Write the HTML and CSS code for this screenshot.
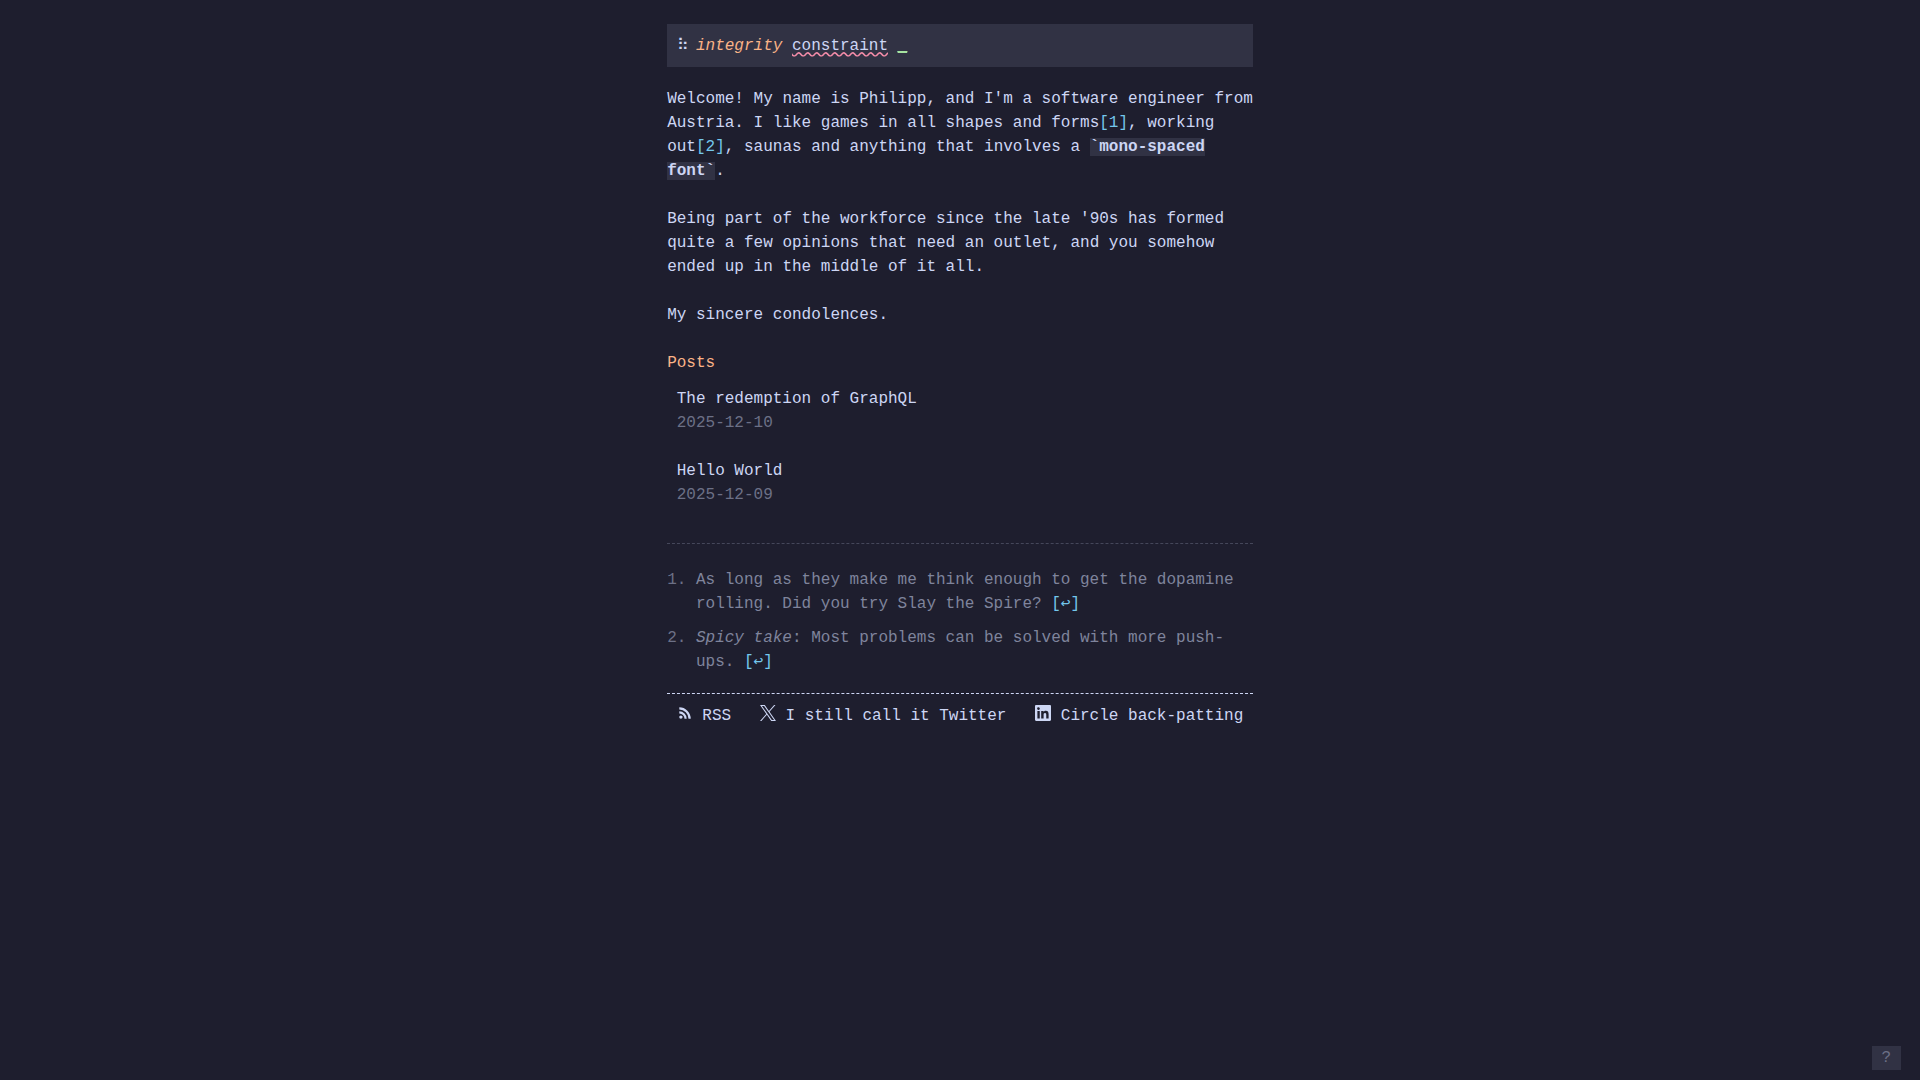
FILE: index.html
```html
<!DOCTYPE html>
<html lang="en">
<head>
    <meta charset="UTF-8">
    <meta name="viewport" content="width=device-width, initial-scale=1.0">
    <title>integrity constraint</title>
    <link rel="stylesheet" href="styles.css">
</head>
<body>
<div class="page">
    <header class="site-header">
        <a href="/"><span class="logo">⠷</span><em>integrity</em> <span class="squiggle">constraint</span> <span class="cursor">_</span></a>
    </header>

    <main>
        <p>Welcome! My name is Philipp, and I'm a software engineer from Austria. I like games in all shapes and forms<a class="ref" id="ref-1" href="#note-1">[1]</a>, working out<a class="ref" id="ref-2" href="#note-2">[2]</a>, saunas and anything that involves a <code>`mono-spaced font`</code>.</p>
        <p>Being part of the workforce since the late '90s has formed quite a few opinions that need an outlet, and you somehow ended up in the middle of it all.</p>
        <p>My sincere condolences.</p>

        <h2>Posts</h2>
        <ul class="posts">
            <li>
                <a href="/posts/the-redemption-of-graphql">The redemption of GraphQL</a>
                <time datetime="2025-12-10">2025-12-10</time>
            </li>
            <li>
                <a href="/posts/hello-world">Hello World</a>
                <time datetime="2025-12-09">2025-12-09</time>
            </li>
        </ul>

        <ol class="footnotes">
            <li id="note-1"><div>As long as they make me think enough to get the dopamine rolling. Did you try Slay the Spire? <a class="ref" href="#ref-1">[↩]</a></div></li>
            <li id="note-2"><div><em>Spicy take</em>: Most problems can be solved with more push-ups. <a class="ref" href="#ref-2">[↩]</a></div></li>
        </ol>
    </main>

    <footer class="site-footer">
        <a href="/rss.xml">
            <svg viewBox="0 0 16 16" aria-hidden="true">
                <circle cx="3.9" cy="12.1" r="1.7" fill="currentColor"/>
                <path d="M2.3 7.4a6.3 6.3 0 0 1 6.3 6.3M2.3 3.4a10.3 10.3 0 0 1 10.3 10.3" fill="none" stroke="currentColor" stroke-width="2.2"/>
            </svg>
            RSS
        </a>
        <a href="https://x.com">
            <svg viewBox="0 0 16 16" aria-hidden="true">
                <path d="M9.52 6.78 15.48 0h-1.41L8.9 5.88 4.76 0H0l6.25 8.9L0 16h1.41l5.46-6.21L11.24 16H16L9.52 6.78zM7.59 8.97l-.63-.88L1.92 1.04h2.17l4.06 5.69.64.88 5.28 7.4h-2.17L7.59 8.97z" fill="currentColor"/>
            </svg>
            I still call it Twitter
        </a>
        <a href="https://www.linkedin.com">
            <svg viewBox="0 0 16 16" aria-hidden="true">
                <path d="M14.8 0H1.2C.5 0 0 .5 0 1.15v13.7C0 15.5.5 16 1.2 16h13.6c.7 0 1.2-.5 1.2-1.15V1.15C16 .5 15.5 0 14.8 0zM4.75 13.6H2.4V6h2.35v7.6zM3.6 4.95a1.38 1.38 0 1 1 0-2.75 1.38 1.38 0 0 1 0 2.75zM13.6 13.6h-2.35V9.9c0-.9 0-2-1.25-2s-1.4.95-1.4 1.95v3.75H6.2V6h2.3v1.05c.3-.6 1.1-1.25 2.25-1.25 2.4 0 2.85 1.6 2.85 3.65v4.15z" fill="currentColor"/>
            </svg>
            Circle back-patting
        </a>
    </footer>
</div>
<button class="help" type="button" aria-label="Help">?</button>
</body>
</html>
```
FILE: styles.css
```css
:root {
    --base: #1e1e2e;
    --surface: #313244;
    --line: #45475a;
    --muted: #6c7086;
    --subtle: #7f849c;
    --text: #cdd6f4;
    --peach: #fab387;
    --red: #f38ba8;
    --green: #a6e3a1;
    --blue: #74c7ec;
}

* {
    box-sizing: border-box;
    margin: 0;
    padding: 0;
}

body {
    background: var(--base);
    color: var(--text);
    font: 16px/24px "Liberation Mono", monospace;
}

a {
    color: inherit;
    text-decoration: none;
}

.page {
    max-width: 61ch;
    margin: 24px auto;
}

.site-header {
    margin-bottom: 20px;
    padding: 10px 1ch 9px;
    background: var(--surface);
}

.site-header a {
    display: block;
}

.logo {
    display: inline-block;
    width: 2ch;
}

.site-header em {
    color: var(--peach);
}

.squiggle {
    text-decoration: underline wavy var(--red);
}

.cursor {
    color: var(--green);
    font-weight: bold;
    text-decoration: underline 2px;
    text-decoration-skip-ink: none;
    text-underline-offset: 1px;
}

p {
    margin-bottom: 24px;
}

code {
    background: var(--surface);
    font-family: inherit;
    font-weight: bold;
}

.ref {
    color: var(--blue);
}

h2 {
    margin-bottom: 12px;
    color: var(--peach);
    font-size: 16px;
    font-weight: normal;
}

.posts {
    display: grid;
    gap: 24px;
    padding: 0 1ch;
    list-style: none;
}

.posts a,
.posts time {
    display: block;
}

.posts time {
    color: var(--muted);
}

.footnotes {
    display: grid;
    gap: 10px;
    margin-top: 36px;
    padding: 24px 0 19px;
    border-top: 1px dashed var(--line);
    color: var(--subtle);
    list-style: none;
    counter-reset: note;
}

.footnotes li {
    display: flex;
    counter-increment: note;
}

.footnotes li::before {
    content: counter(note) ".";
    flex: 0 0 3ch;
    color: var(--muted);
}

.site-footer {
    display: flex;
    flex-wrap: wrap;
    justify-content: space-between;
    padding: 10px 1ch;
    border-top: 1px dashed var(--text);
}

.site-footer a {
    display: flex;
    gap: 1ch;
}

.site-footer svg {
    width: 16px;
    height: 16px;
    margin-top: 1px;
}

.help {
    position: fixed;
    right: 2ch;
    bottom: 10px;
    padding: 0 1ch;
    border: 0;
    background: var(--surface);
    color: var(--muted);
    font: inherit;
    cursor: pointer;
}
```
